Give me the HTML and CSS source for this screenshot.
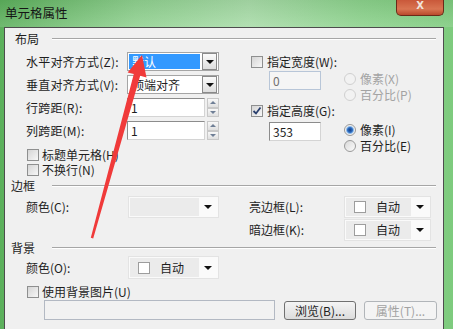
FILE: index.html
```html
<!DOCTYPE html>
<html lang="zh-CN">
<head>
    <meta charset="UTF-8">
    <title>单元格属性</title>
    <link rel="stylesheet" href="styles.css">
</head>
<body>
    <div class="window">
        <div class="titlebar">
            <span class="title">单元格属性</span>
            <div class="close">X</div>
        </div>

        <div class="frame">
            <!-- 布局 -->
            <div class="group-head"><span>布局</span><i class="rule"></i></div>
            <div class="layout">
                <div class="col-left">
                    <div class="row">
                        <label>水平对齐方式(Z):</label>
                        <div class="combo selected"><span class="val">默认</span><span class="drop"><i class="tri"></i></span></div>
                    </div>
                    <div class="row">
                        <label>垂直对齐方式(V):</label>
                        <div class="combo"><span class="val">顶端对齐</span><span class="drop"><i class="tri"></i></span></div>
                    </div>
                    <div class="row">
                        <label>行跨距(R):</label>
                        <div class="input">1</div>
                        <div class="spin"><span><i class="up"></i></span><span><i class="down"></i></span></div>
                    </div>
                    <div class="row">
                        <label>列跨距(M):</label>
                        <div class="input">1</div>
                        <div class="spin"><span><i class="up"></i></span><span><i class="down"></i></span></div>
                    </div>
                    <div class="check first"><span class="cb"></span>标题单元格(H)</div>
                    <div class="check"><span class="cb"></span>不换行(N)</div>
                </div>

                <div class="col-right">
                    <div class="check size-check"><span class="cb"></span>指定宽度(W):</div>
                    <div class="size-block">
                        <div class="input small disabled">0</div>
                        <div class="radios">
                            <div class="radio disabled"><span class="rd"></span>像素(X)</div>
                            <div class="radio disabled"><span class="rd"></span>百分比(P)</div>
                        </div>
                    </div>
                    <div class="check size-check"><span class="cb checked"><svg viewBox="0 0 10 10"><path d="M1.5 5 L4 7.5 L8.5 1.5" fill="none" stroke="#2a3f6e" stroke-width="1.8"/></svg></span>指定高度(G):</div>
                    <div class="size-block second">
                        <div class="input small">353</div>
                        <div class="radios">
                            <div class="radio"><span class="rd on"></span>像素(I)</div>
                            <div class="radio"><span class="rd"></span>百分比(E)</div>
                        </div>
                    </div>
                </div>
            </div>

            <!-- 边框 -->
            <div class="group-head tight"><span>边框</span><i class="rule"></i></div>
            <div class="border-grid">
                <label>颜色(C):</label>
                <div class="fcombo"><span class="fill"></span><span class="arr"><i class="tri"></i></span></div>
                <span></span>
                <label>亮边框(L):</label>
                <div class="fcombo"><span class="fill"><i class="swatch"></i>自动</span><span class="arr"><i class="tri"></i></span></div>
                <span></span><span></span><span></span>
                <label>暗边框(K):</label>
                <div class="fcombo"><span class="fill"><i class="swatch"></i>自动</span><span class="arr"><i class="tri"></i></span></div>
            </div>

            <!-- 背景 -->
            <div class="group-head tight bg"><span>背景</span><i class="rule"></i></div>
            <div class="bg-row">
                <label>颜色(O):</label>
                <div class="fcombo"><span class="fill"><i class="swatch"></i>自动</span><span class="arr"><i class="tri"></i></span></div>
            </div>
            <div class="check bg-check"><span class="cb"></span>使用背景图片(U)</div>
            <div class="file-row">
                <div class="path"></div>
                <button class="btn">浏览(B)...</button>
                <button class="btn" disabled>属性(T)...</button>
            </div>
        </div>

        <svg class="arrow" viewBox="0 0 453 329">
            <polygon points="142,55 146.5,77.5 140.2,75.8 93.2,238.5 90.8,237.8 133.8,74 127.6,72.4" fill="#f03a3a"/>
        </svg>
    </div>
</body>
</html>
```

FILE: styles.css
```css
/* General */
body {
    margin: 0;
    font-family: "Noto Sans CJK SC", "DejaVu Sans", sans-serif;
    font-size: 12px;
    line-height: 14px;
    color: #1e1e1e;
    background-color: #ffffff;
}

.window {
    position: relative;
    width: 453px;
    height: 329px;
    overflow: hidden;
    background: linear-gradient(to right, #5cb05c 0%, #8fd18f 30%, #a8dca8 55%, #8bd28b 80%, #7ecb7e 100%);
}

/* Title bar */
.titlebar {
    display: flex;
    align-items: flex-start;
    height: 27px;
    background: linear-gradient(to bottom, rgba(0, 0, 0, 0.06), rgba(255, 255, 255, 0.12));
}

.title {
    margin: 5px 0 0 5px;
    font-size: 12.5px;
    line-height: 16px;
    color: #151515;
}

.close {
    margin-left: auto;
    margin-right: 9px;
    width: 48px;
    height: 16px;
    box-sizing: border-box;
    border: 1px solid #6a2a18;
    border-top: none;
    border-radius: 0 0 5px 5px;
    background: linear-gradient(to bottom, #c9583a, #d97552 60%, #b94a2c);
    color: #f1e4dc;
    font-family: "DejaVu Sans", sans-serif;
    font-weight: bold;
    font-size: 10px;
    line-height: 11px;
    text-align: center;
}

/* Dialog frame */
.frame {
    margin-left: 4px;
    width: 438px;
    height: 302px;
    border: 1px solid #4d4d4d;
    border-bottom: none;
    background-color: #f0f0f0;
}

.group-head {
    display: flex;
    align-items: center;
    height: 16px;
    margin-top: 3px;
    padding: 0 7px 0 10px;
    line-height: 16px;
}

.group-head span {
    flex: 0 0 37px;
}

.group-head .rule {
    flex: 1;
    border-top: 1px solid #a6a6a6;
    border-bottom: 1px solid #ffffff;
}

.group-head.tight {
    margin-top: 1px;
    padding-left: 6px;
}

.group-head.tight span {
    flex-basis: 41px;
}

.group-head.bg {
    height: 14px;
    margin-top: 0;
}

/* Layout section */
.layout {
    display: flex;
    margin-top: 5px;
}

.col-left {
    width: 193px;
    padding-left: 21px;
}

.col-right {
    padding-left: 32px;
}

.row {
    display: flex;
    align-items: center;
    height: 19px;
    margin-bottom: 4px;
}

.row label {
    width: 101px;
    letter-spacing: 0.2px;
}

.combo {
    display: flex;
    align-items: center;
    width: 92px;
    height: 19px;
    box-sizing: border-box;
    padding: 1px;
    border: 1px solid #a5a5a5;
    background-color: #ffffff;
}

.combo .val {
    flex: 1;
    height: 15px;
    padding-left: 3px;
    line-height: 15px;
}

.combo.selected .val {
    background-color: #3399ff;
    color: #ffffff;
    margin-right: 2px;
}

.combo .drop {
    display: flex;
    align-items: center;
    justify-content: center;
    width: 13px;
    height: 15px;
    border: 1px solid #8a8a8a;
    background: linear-gradient(to bottom, #fbfbfb, #dedede);
}

.tri {
    width: 0;
    height: 0;
    border-left: 4px solid transparent;
    border-right: 4px solid transparent;
    border-top: 4px solid #111111;
}

.input {
    width: 78px;
    height: 19px;
    box-sizing: border-box;
    padding-left: 3px;
    border: 1px solid #8c8c8c;
    border-right-color: #d4d4d4;
    border-bottom-color: #d4d4d4;
    background-color: #ffffff;
    line-height: 17px;
}

.spin {
    display: flex;
    flex-direction: column;
    width: 12px;
    height: 19px;
    margin-left: 2px;
}

.spin span {
    display: flex;
    align-items: center;
    justify-content: center;
    flex: 1;
    border: 1px solid #c8c8c8;
    background: linear-gradient(to bottom, #f8f8f8, #e0e0e0);
}

.spin .up {
    border-left: 3px solid transparent;
    border-right: 3px solid transparent;
    border-bottom: 3px solid #6f7f96;
}

.spin .down {
    border-left: 3px solid transparent;
    border-right: 3px solid transparent;
    border-top: 3px solid #6f7f96;
}

/* Checkboxes and radios */
.check {
    display: flex;
    align-items: center;
    height: 15px;
    padding-left: 1px;
}

.check.first {
    margin-top: 7px;
}

.cb {
    display: inline-flex;
    flex: none;
    width: 12px;
    height: 12px;
    box-sizing: border-box;
    margin-right: 3px;
    border: 1px solid #8e8f8f;
    background: linear-gradient(135deg, #d5d5d5, #f7f7f7);
}

.cb svg {
    width: 10px;
    height: 10px;
}

.size-check {
    height: 19px;
    padding-left: 0;
}

.size-check .cb {
    margin-right: 4px;
}

.size-check + .size-block + .size-check {
    height: 14px;
    margin-top: 1px;
}

.size-block {
    display: flex;
    padding-left: 18px;
}

.size-block.second {
    margin-top: 4px;
}

.input.small {
    width: 52px;
}

.input.disabled {
    border: 1px solid #b8c6d8;
    background-color: #f5f5f5;
    color: #707070;
}

.radios {
    margin-left: 23px;
}

.radio {
    display: flex;
    align-items: center;
    height: 16px;
}

.radio.disabled {
    color: #a3a3a3;
}

.rd {
    flex: none;
    width: 12px;
    height: 12px;
    box-sizing: border-box;
    margin-right: 4px;
    border: 1px solid #9a9a9a;
    border-radius: 50%;
    background: linear-gradient(135deg, #d9d9d9, #fbfbfb);
}

.radio.disabled .rd {
    border-color: #d0d0d0;
    background: #f2f2f2;
}

.rd.on {
    background: radial-gradient(circle, #163f82 0, #2f6fc4 2.5px, #8fbbe8 3.5px, #f2f2f2 4.5px);
}

/* Border section */
.border-grid {
    display: grid;
    grid-template-columns: 102px 91px 30px 95px 87px;
    grid-template-rows: 22px 22px;
    row-gap: 1px;
    align-items: center;
    margin-top: 2px;
    padding-left: 21px;
}

.fcombo {
    display: flex;
    height: 22px;
    box-sizing: border-box;
    padding: 1px;
    border: 1px solid #e3e3e3;
    background-color: #fafafa;
}

.fcombo .fill {
    display: flex;
    align-items: center;
    flex: 1;
    background-color: #ebebeb;
}

.fcombo .arr {
    display: flex;
    align-items: center;
    justify-content: center;
    width: 18px;
}

.swatch {
    width: 10px;
    height: 10px;
    margin: 0 10px 0 8px;
    border: 1px solid #9d9d9d;
    background-color: #ffffff;
}

/* Background section */
.bg-row {
    display: flex;
    align-items: center;
    margin-top: 1px;
    padding-left: 21px;
}

.bg-row label {
    width: 102px;
}

.bg-row .fcombo {
    width: 91px;
    height: 23px;
}

.check.bg-check {
    height: 14px;
    margin-top: 6px;
    padding-left: 22px;
}

.file-row {
    display: flex;
    align-items: flex-start;
    margin-top: 1px;
    padding-left: 39px;
}

.path {
    width: 231px;
    height: 20px;
    box-sizing: border-box;
    border: 1px solid #b3b9c3;
    background-color: #f2f2f2;
}

.btn {
    height: 19px;
    margin: 1px 0 0 9px;
    padding: 0;
    width: 72px;
    border: 1px solid #707070;
    border-radius: 3px;
    background: linear-gradient(to bottom, #f4f4f4, #dcdcdc);
    font-family: inherit;
    font-size: 12px;
    line-height: 16px;
    color: #1e1e1e;
}

.btn:disabled {
    width: 73px;
    margin-left: 8px;
    border-color: #b1b5b9;
    background: #f4f4f4;
    color: #a2a2a2;
}

/* Red annotation arrow over the dialog */
.arrow {
    position: absolute;
    top: 0;
    left: 0;
    width: 453px;
    height: 329px;
    pointer-events: none;
}
```
